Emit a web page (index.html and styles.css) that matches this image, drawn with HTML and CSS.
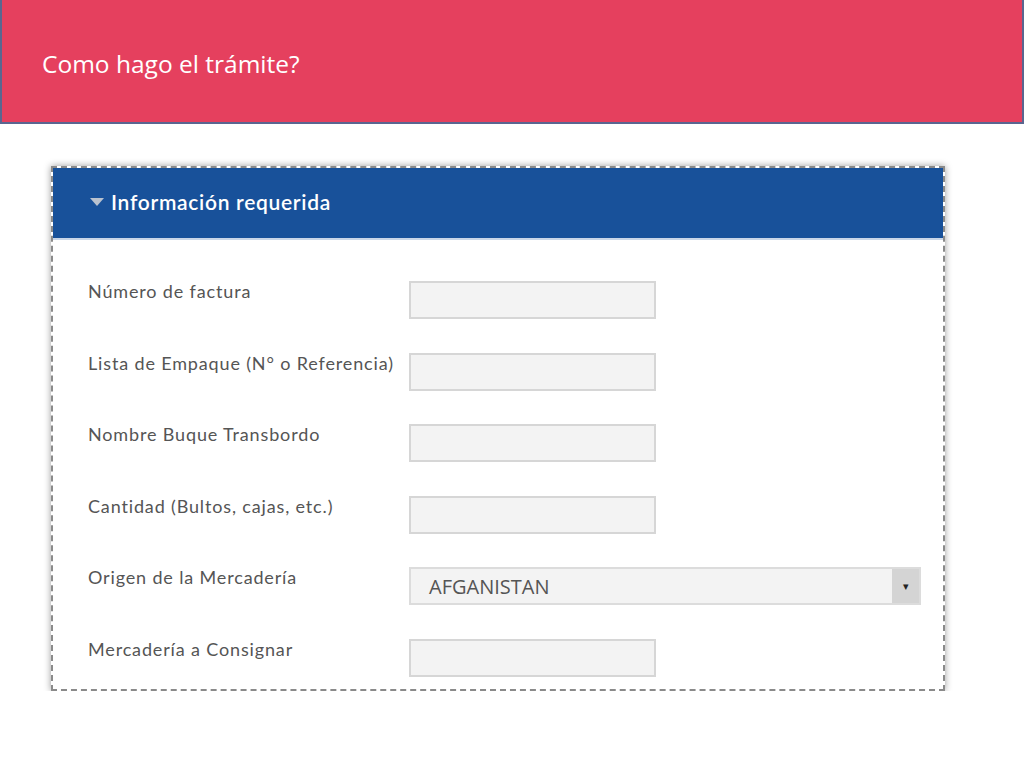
FILE: index.html
```html
<!DOCTYPE html>
<html lang="es">
<head>
    <meta charset="UTF-8">
    <title>Como hago el trámite?</title>
<link rel="stylesheet" href="styles.css">
</head>
<body>
    <!-- Banda del título -->
    <div class="banda">
        <h1>Como hago el trámite?</h1>
    </div>
    <!-- Panel con el formulario -->
    <div class="panel">
        <div class="panel-cabecera">
            <span class="flecha"></span>
            <h2>Información requerida</h2>
        </div>
        <div class="panel-cuerpo">
            <div class="fila">
                <label>Número de factura</label>
                <div class="campo"></div>
            </div>
            <div class="fila">
                <label>Lista de Empaque (N° o Referencia)</label>
                <div class="campo"></div>
            </div>
            <div class="fila">
                <label>Nombre Buque Transbordo</label>
                <div class="campo"></div>
            </div>
            <div class="fila">
                <label>Cantidad (Bultos, cajas, etc.)</label>
                <div class="campo"></div>
            </div>
            <div class="fila">
                <label>Origen de la Mercadería</label>
                <div class="selector">
                    <span class="selector-valor">AFGANISTAN</span>
                    <span class="selector-boton">&#9662;</span>
                </div>
            </div>
            <div class="fila">
                <label>Mercadería a Consignar</label>
                <div class="campo"></div>
            </div>
        </div>
    </div>
</body>
</html>
```

FILE: styles.css
```css
/* Estilo general */
body {
    margin: 0;
    background: #fff;
    font-family: "Lato", "Open Sans", sans-serif;
}

/* Banda roja del título */
.banda {
    height: 122px;
    background-color: #e5405e;
    border-left: 2px solid #5a6690;
    border-right: 2px solid #5a6690;
    border-bottom: 2px solid #5a6690;
    display: flex;
    align-items: center;
}

.banda h1 {
    margin: 0 0 0 40px;
    padding-top: 4px;
    color: #fff;
    font-family: "Open Sans", sans-serif;
    font-weight: 400;
    font-size: 24.5px;
}

/* Panel del formulario */
.panel {
    width: 890px;
    margin: 42px 0 0 51px;
    border: 2px dashed #8a8a8a;
    box-shadow: 0 0 7px rgba(0, 0, 0, 0.4);
    background: #fff;
}

.panel-cabecera {
    height: 70px;
    background-color: #18519a;
    border-bottom: 2px solid #c9d6e8;
    display: flex;
    align-items: center;
    padding-left: 37px;
}

.panel-cabecera h2 {
    margin: 0 0 3px 0;
    color: #fff;
    font-size: 21px;
    font-weight: 600;
    letter-spacing: 0.7px;
}

/* Triángulo del desplegable */
.flecha {
    width: 0;
    height: 0;
    border-left: 7px solid transparent;
    border-right: 7px solid transparent;
    border-top: 8px solid #b9c2cf;
    margin-right: 7px;
    margin-top: -2px;
}

.panel-cuerpo {
    padding: 41px 0 10px 35px;
}

.fila {
    display: flex;
    align-items: flex-start;
    height: 71.6px;
}

.fila:last-child {
    height: 40px;
}

.fila label {
    width: 321px;
    color: #555;
    font-size: 18px;
    letter-spacing: 0.85px;
    margin-top: -1px;
}

/* Cajas de texto */
.campo {
    width: 243px;
    height: 34px;
    border: 2px solid #d6d6d6;
    background: #f3f3f3;
}

/* Selector de país */
.selector {
    width: 508px;
    height: 34px;
    border: 2px solid #dcdcdc;
    background: #f3f3f3;
    display: flex;
    align-items: center;
}

.selector-valor {
    flex: 1;
    padding-left: 18px;
    color: #555;
    font-size: 20px;
    font-family: "Open Sans", sans-serif;
}

.selector-boton {
    width: 27px;
    height: 34px;
    background: #d4d4d4;
    color: #222;
    font-size: 11px;
    display: flex;
    justify-content: center;
    align-items: center;
}
```
